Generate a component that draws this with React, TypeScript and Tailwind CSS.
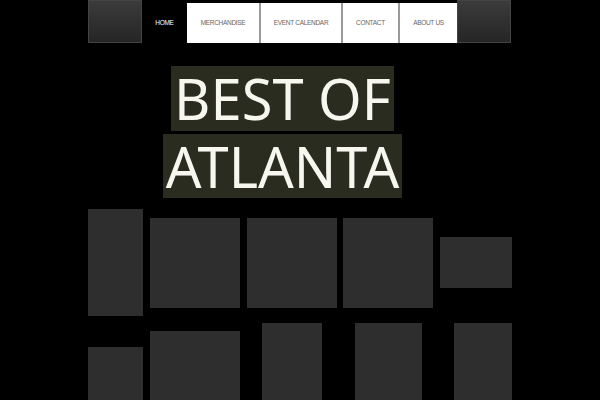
const navItems = [
  { label: 'HOME', width: 'w-[45px]', active: true },
  { label: 'MERCHANDISE', width: 'w-[72px]' },
  { label: 'EVENT CALENDAR', width: 'w-[82px]' },
  { label: 'CONTACT', width: 'w-[57px]' },
  { label: 'ABOUT US', width: 'w-[59px]' },
]

function SideBlock() {
  return (
    <div className="w-[54px] h-[43px] bg-gradient-to-b from-[#3b3b3b] to-[#262626] border border-[#444]" />
  )
}

function Tile({ className }: { className: string }) {
  return <div className={`bg-[#2e2e2e] shrink-0 ${className}`} />
}

export default function App() {
  return (
    <div className="w-[600px] h-[400px] bg-black overflow-hidden" style={{ fontFamily: '"Noto Sans", sans-serif' }}>
      <nav className="flex ml-[88px] w-[424px]">
        <SideBlock />
        <div className="flex mt-[3px] h-[40px] bg-white">
          {navItems.map((item, i) => (
            <div
              key={item.label}
              className={`${item.width} flex items-center justify-center text-[6.5px] tracking-[-0.3px] font-light ${
                item.active ? 'bg-black text-white' : 'text-[#666]'
              } ${i > 1 ? 'border-l-2 border-[#9a9a9a]' : ''}`}
              style={{ fontFamily: '"Liberation Sans", sans-serif' }}
            >
              {item.label}
            </div>
          ))}
        </div>
        <SideBlock />
      </nav>

      <div className="w-[565px] mt-[23px] flex flex-col items-center gap-[3px] text-[56px] text-[#f7f7f0]">
        <div className="bg-[#2b2c20] h-[65px] leading-[65px] px-[3px]">BEST OF</div>
        <div className="bg-[#2b2c20] h-[64px] leading-[64px] px-[3px]">ATLANTA</div>
      </div>

      <div className="ml-[88px] mt-[11px] w-[424px] flex flex-col gap-[7px]">
        <div className="flex items-center gap-[6.75px] h-[107px]">
          <Tile className="w-[55px] h-[107px]" />
          <Tile className="w-[90px] h-[90px]" />
          <Tile className="w-[90px] h-[90px]" />
          <Tile className="w-[90px] h-[90px]" />
          <Tile className="w-[72px] h-[51px]" />
        </div>
        <div className="flex items-center gap-[6.75px] h-[110px]">
          <div className="w-[55px] flex"><Tile className="w-[55px] h-[62px]" /></div>
          <div className="w-[90px] flex"><Tile className="w-[90px] h-[94px]" /></div>
          <div className="w-[90px] flex justify-center"><Tile className="w-[60px] h-[110px]" /></div>
          <div className="w-[90px] flex justify-center"><Tile className="w-[67px] h-[110px]" /></div>
          <div className="w-[72px] flex justify-end"><Tile className="w-[58px] h-[110px]" /></div>
        </div>
      </div>
    </div>
  )
}
